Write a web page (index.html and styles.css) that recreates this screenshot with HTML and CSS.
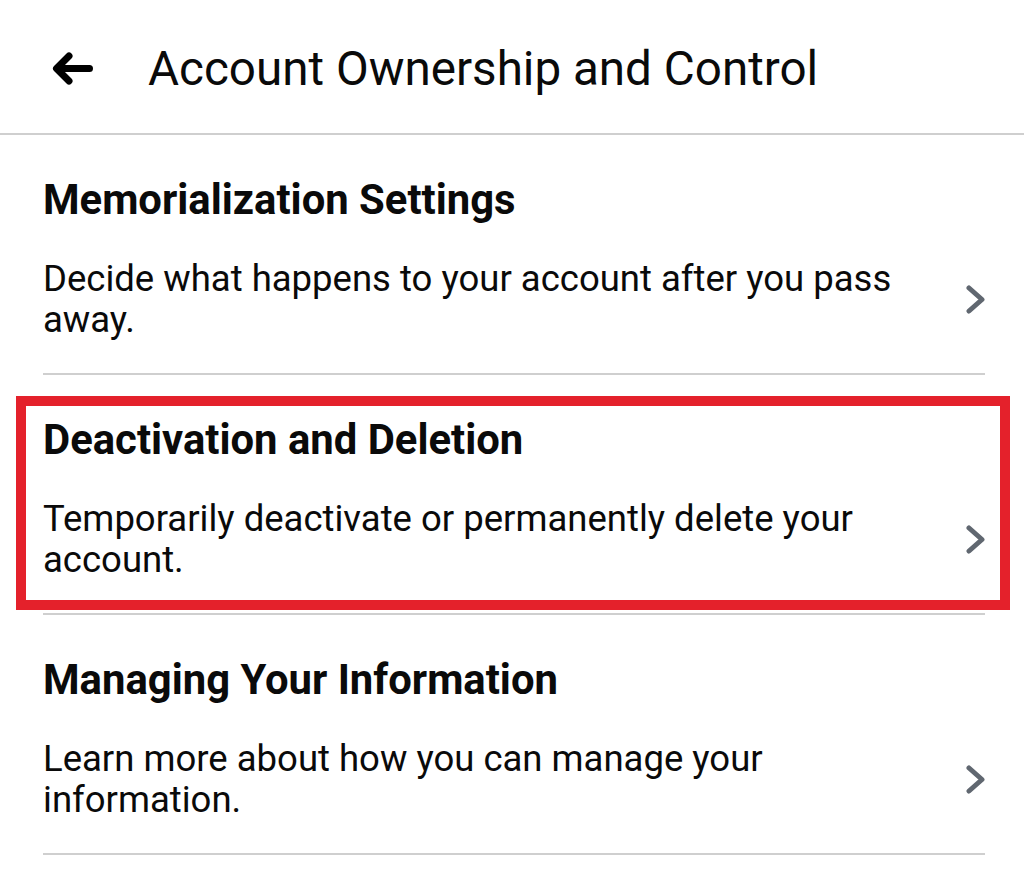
FILE: index.html
```html
<!DOCTYPE html>
<html lang="en">
<head>
<meta charset="utf-8">
<title>Account Ownership and Control</title>
<link rel="stylesheet" href="styles.css">
</head>
<body>
<header class="topbar">
  <svg class="back" width="41" height="33" viewBox="0 0 41 33" aria-hidden="true">
    <path d="M37.5 16.5H5M17 4L4.5 16.5L17 29" fill="none" stroke="#000" stroke-width="7" stroke-linecap="round" stroke-linejoin="round"/>
  </svg>
  <h1 class="title">Account Ownership and Control</h1>
</header>
<main class="list">
  <section class="item">
    <h2 class="item-title">Memorialization Settings</h2>
    <div class="item-row">
      <p class="item-desc">Decide what happens to your account after you pass away.</p>
      <svg class="chev" width="19" height="29" viewBox="0 0 19 29" aria-hidden="true"><path d="M3 3L16 14.5L3 26" fill="none" stroke="#606770" stroke-width="5" stroke-linecap="round" stroke-linejoin="round"/></svg>
    </div>
  </section>
  <section class="item">
    <div class="highlight"></div>
    <h2 class="item-title">Deactivation and Deletion</h2>
    <div class="item-row">
      <p class="item-desc">Temporarily deactivate or permanently delete your account.</p>
      <svg class="chev" width="19" height="29" viewBox="0 0 19 29" aria-hidden="true"><path d="M3 3L16 14.5L3 26" fill="none" stroke="#606770" stroke-width="5" stroke-linecap="round" stroke-linejoin="round"/></svg>
    </div>
  </section>
  <section class="item">
    <h2 class="item-title">Managing Your Information</h2>
    <div class="item-row">
      <p class="item-desc">Learn more about how you can manage your information.</p>
      <svg class="chev" width="19" height="29" viewBox="0 0 19 29" aria-hidden="true"><path d="M3 3L16 14.5L3 26" fill="none" stroke="#606770" stroke-width="5" stroke-linecap="round" stroke-linejoin="round"/></svg>
    </div>
  </section>
</main>
</body>
</html>
```
FILE: styles.css
```css
* { box-sizing: border-box; }
html, body { margin: 0; padding: 0; background: #fff; }
body {
  font-family: Roboto, "Liberation Sans", Arial, sans-serif;
  color: #0a0a0a;
  width: 1024px;
  height: 880px;
  overflow: hidden;
}
.topbar {
  height: 135px;
  border-bottom: 2px solid #cfcfcf;
  display: flex;
  align-items: center;
  padding-left: 52px;
  padding-top: 4px;
}
.back { flex: none; display: block; }
.title {
  margin: 0 0 0 55px;
  font-size: 47.6px;
  font-weight: 400;
  line-height: 54px;
  color: #0a0a0a;
}
.list { display: flex; flex-direction: column; }
.item {
  position: relative;
  height: 240px;
  margin: 0 39px 0 43px;
  border-bottom: 2px solid #cfcfcf;
  padding-top: 40px;
}
.item-title {
  margin: 0;
  font-size: 41.8px;
  font-weight: 700;
  line-height: 50px;
  color: #0a0a0a;
}
.item-row {
  margin-top: 33px;
  display: flex;
  align-items: center;
  justify-content: space-between;
}
.item-desc {
  margin: 0;
  width: 880px;
  font-size: 36.5px;
  line-height: 41px;
  font-weight: 400;
  color: #0a0a0a;
}
.chev { flex: none; display: block; }
.highlight {
  position: absolute;
  left: -27px;
  top: 21px;
  width: 994px;
  height: 214px;
  border: 10px solid #e4212b;
  pointer-events: none;
}
```
